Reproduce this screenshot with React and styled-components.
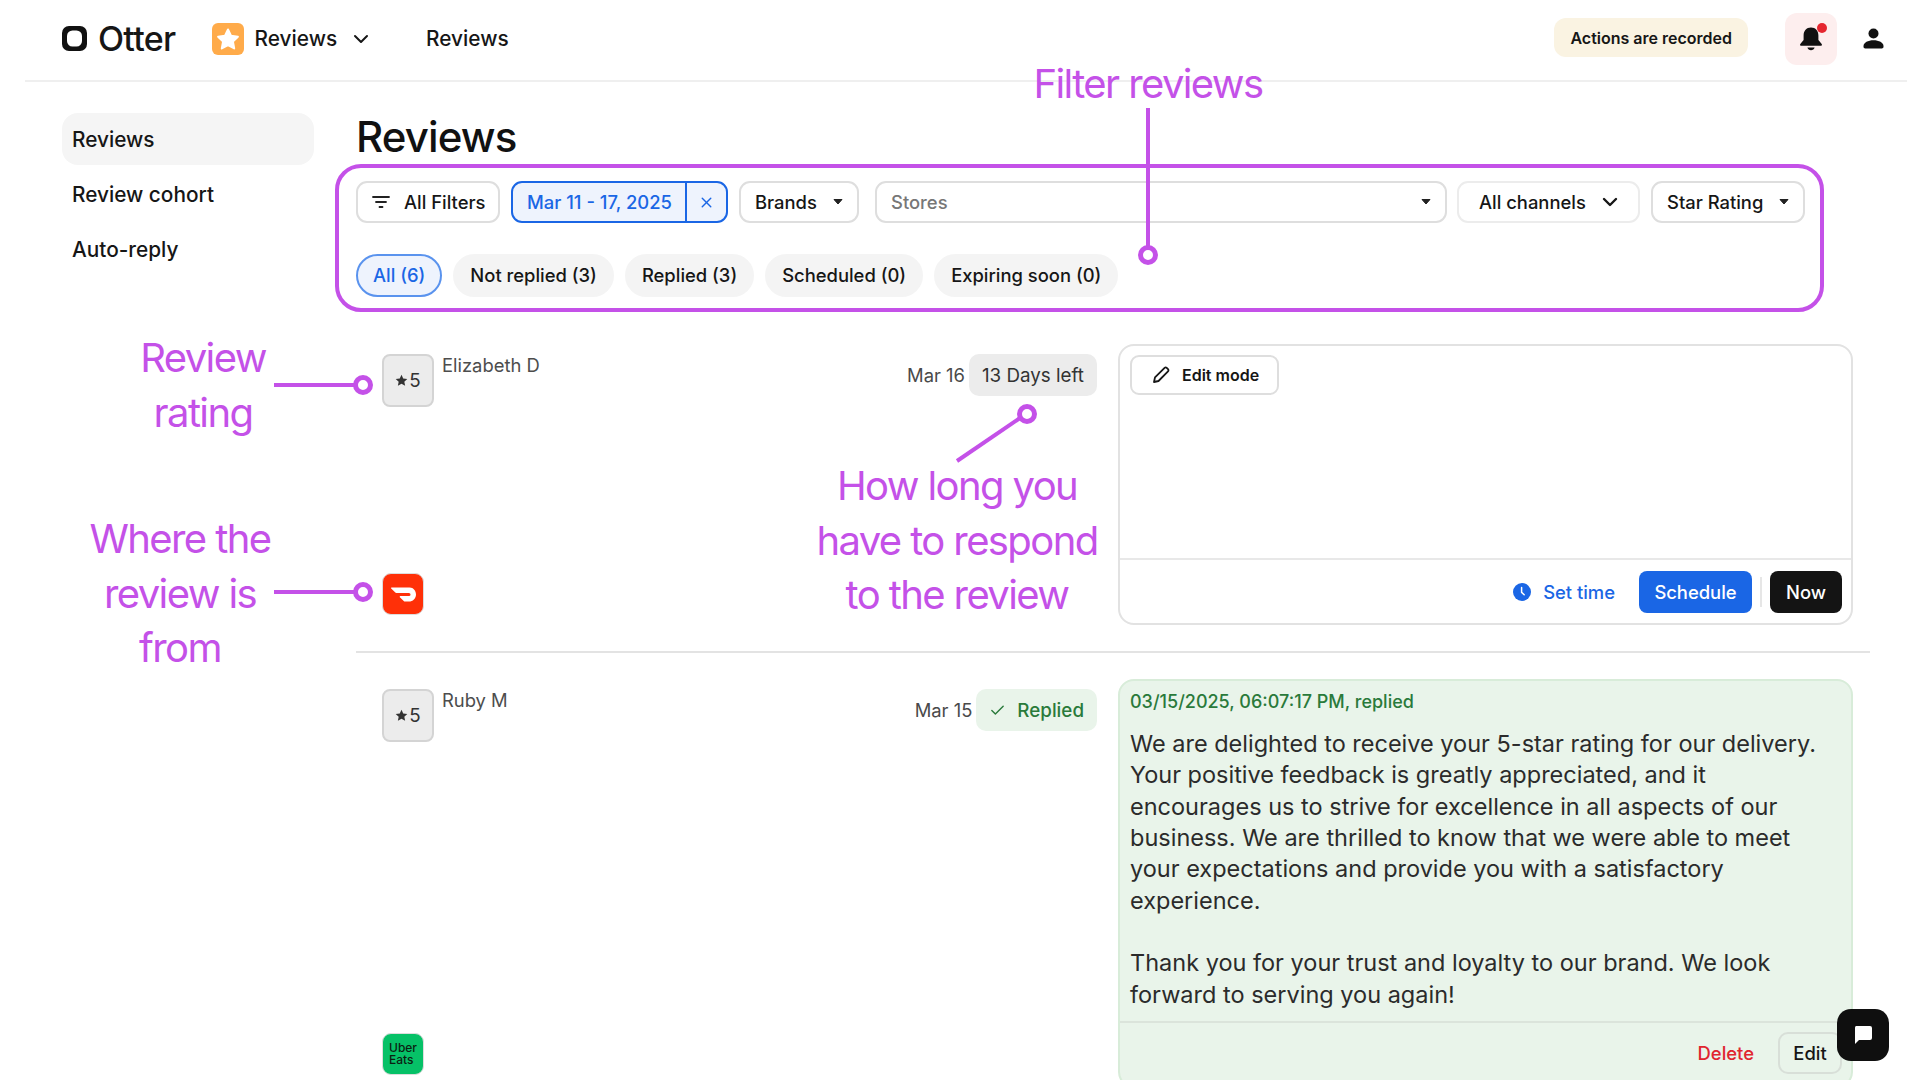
import React from "react";
import styled, { createGlobalStyle } from "styled-components";
import { ChevronDown, Check, X } from "lucide-react";

const purple = "#c451e8";
const blue = "#1a66e5";
const ink = "#161616";

const GlobalStyle = createGlobalStyle`
  * { box-sizing: border-box; }
  html, body { margin: 0; padding: 0; background: #fff; }
  body {
    font-family: Inter, "Liberation Sans", sans-serif;
    color: ${ink};
    overflow: hidden;
  }
`;

const Page = styled.div`
  position: relative;
  width: 1920px;
  height: 1080px;
  overflow: hidden;
`;

/* ---------- top bar ---------- */
const TopBar = styled.header`
  display: flex;
  align-items: center;
  height: 82px;
  margin: 0 13px 0 25px;
  padding: 0 23px 3px 37px;
  border-bottom: 2px solid #efefef;
`;
const LogoText = styled.span`
  margin-left: 11px;
  font-size: 34px;
  font-weight: 500;
  letter-spacing: -0.7px;
`;
const AppSwitch = styled.div`
  display: flex;
  align-items: center;
  margin-left: 36px;
  font-size: 20.8px;
  font-weight: 500;
  gap: 11px;
`;
const SwitchChevron = styled(ChevronDown)`
  margin-left: 1px;
`;
const Crumb = styled.span`
  margin-left: 53px;
  font-size: 20.8px;
  font-weight: 500;
`;
const Recorded = styled.div`
  display: flex;
  align-items: center;
  height: 39px;
  margin: 0 0 2px auto;
  padding: 0 16px;
  border-radius: 12px;
  background: #faf3e2;
  font-size: 16px;
  font-weight: 600;
`;
const BellBox = styled.div`
  position: relative;
  display: flex;
  align-items: center;
  justify-content: center;
  width: 52px;
  height: 52px;
  margin-left: 37px;
  border-radius: 12px;
  background: #fdeeee;
`;
const BellDot = styled.span`
  position: absolute;
  top: 10px;
  right: 10px;
  width: 10px;
  height: 10px;
  border-radius: 50%;
  background: #e5262f;
`;
const UserSlot = styled.div`
  display: flex;
  margin-left: 26px;
`;

/* ---------- body ---------- */
const Body = styled.div`
  display: flex;
  gap: 42px;
  padding: 31px 0 0 62px;
`;
const Sidebar = styled.nav`
  display: flex;
  flex-direction: column;
  gap: 3px;
  width: 252px;
  flex: none;
`;
const NavItem = styled.div`
  display: flex;
  align-items: center;
  height: 52px;
  padding-left: 10px;
  border-radius: 16px;
  font-size: 20.8px;
  font-weight: 500;
  background: ${(p) => (p.$active ? "#f5f5f5" : "transparent")};
`;
const Main = styled.main`
  width: 1514px;
  flex: none;
`;
const Title = styled.h1`
  margin: 0 0 20px;
  font-size: 42px;
  line-height: 48px;
  font-weight: 500;
  letter-spacing: -0.9px;
  color: #111;
`;
const FilterRow = styled.div`
  display: flex;
  gap: 11px;
  width: 1449px;
  height: 42px;
`;
const FilterBtn = styled.div`
  display: flex;
  align-items: center;
  justify-content: space-between;
  height: 42px;
  padding: 0 ${(p) => p.$pad || 14}px;
  flex: ${(p) => (p.$grow ? 1 : "none")};
  width: ${(p) => (p.$w ? `${p.$w}px` : "auto")};
  margin-left: ${(p) => p.$ml || 0}px;
  border: 2px solid ${(p) => p.$line || "#dedede"};
  border-radius: 11px;
  background: #fff;
  font-size: 18.4px;
  font-weight: 500;
  white-space: nowrap;
  color: ${(p) => p.$color || ink};
`;
const FilterLabel = styled.span`
  display: flex;
  align-items: center;
  gap: 14px;
`;
const ChannelChevron = styled(ChevronDown)`
  margin-right: -4px;
`;
const DateChip = styled.div`
  display: flex;
  width: 217px;
  height: 42px;
  border: 2px solid ${blue};
  border-radius: 11px;
  background: #eef3fd;
  color: ${blue};
  font-size: 18.4px;
  font-weight: 500;
`;
const DateLabel = styled.span`
  display: flex;
  align-items: center;
  flex: 1;
  padding-left: 14px;
`;
const DateClear = styled.span`
  display: flex;
  align-items: center;
  justify-content: center;
  width: 41px;
  border-left: 2px solid ${blue};
`;
const PillRow = styled.div`
  display: flex;
  gap: 11px;
  margin: 31px 0 47px;
`;
const Pill = styled.div`
  display: flex;
  align-items: center;
  height: 43px;
  padding: 0 15px 1px;
  border-radius: 22px;
  border: 2px solid ${(p) => (p.$active ? "#5a93ee" : "#f4f4f4")};
  background: ${(p) => (p.$active ? "#eef3fd" : "#f4f4f4")};
  color: ${(p) => (p.$active ? blue : ink)};
  font-size: 18.4px;
  font-weight: 500;
`;

/* ---------- review rows ---------- */
const Row = styled.section`
  display: grid;
  grid-template-columns: 741px 735px;
  column-gap: 21px;
  padding: 0 0 26px 0;
  margin-bottom: 26px;
  border-bottom: ${(p) => (p.$last ? "none" : "2px solid #e3e3e3")};
`;
const Left = styled.div`
  display: flex;
  flex-direction: column;
  justify-content: space-between;
  padding: 10px 0 ${(p) => p.$bottom || 10}px 26px;
`;
const LeftTop = styled.div`
  display: flex;
  align-items: flex-start;
`;
const Rating = styled.div`
  display: flex;
  align-items: center;
  justify-content: center;
  gap: 1px;
  width: 52px;
  height: 53px;
  border: 2px solid #d4d4d4;
  border-radius: 8px;
  background: #ececec;
  font-size: 18.8px;
  color: #333;
`;
const Reviewer = styled.div`
  margin-left: 8px;
  font-size: 18.4px;
  line-height: 23px;
  color: #4d4d4d;
`;
const Dateline = styled.span`
  margin-left: auto;
  margin-right: 4px;
  line-height: 42px;
  font-size: 18.4px;
  color: #4a4a4a;
`;
const Badge = styled.div`
  display: flex;
  align-items: center;
  gap: ${(p) => (p.$green ? 11 : 12)}px;
  height: 42px;
  padding: 0 13px;
  border-radius: 10px;
  background: ${(p) => (p.$green ? "#e9f4ea" : "#ececec")};
  color: ${(p) => (p.$green ? "#2a7a3b" : "#333")};
  font-size: 18.8px;
  font-weight: ${(p) => (p.$green ? 500 : 400)};
`;
const ChannelTile = styled.div`
  display: flex;
  align-items: center;
  justify-content: center;
  width: 42px;
  height: 42px;
  border: 1px solid #ddd;
  border-radius: 9px;
  background: ${(p) => p.$bg};
`;
const UberText = styled.span`
  font-size: 12px;
  line-height: 12px;
  font-weight: 500;
  color: #0b1f12;
`;
const Card = styled.div`
  display: flex;
  flex-direction: column;
  min-height: 281px;
  border: 2px solid ${(p) => (p.$green ? "#d8ecd9" : "#e2e2e2")};
  border-radius: 16px;
  background: ${(p) => (p.$green ? "#e9f4ea" : "#fff")};
`;
const CardBody = styled.div`
  flex: 1;
  padding: 9px 10px;
`;
const EditMode = styled.div`
  display: inline-flex;
  align-items: center;
  gap: 12px;
  height: 40px;
  padding: 0 18px 0 20px;
  border: 2px solid #dedede;
  border-radius: 9px;
  font-size: 16px;
  font-weight: 600;
`;
const CardFooter = styled.div`
  display: flex;
  align-items: center;
  justify-content: flex-end;
  height: 65px;
  padding: ${(p) => (p.$green ? "0 9px 3px 0" : "1px 9px 0 0")};
  border-top: 2px solid ${(p) => (p.$green ? "#dbe4db" : "#e8e8e8")};
`;
const SetTime = styled.span`
  display: flex;
  align-items: center;
  gap: 12px;
  margin-right: 24px;
  color: ${blue};
  font-size: 18.4px;
  font-weight: 500;
`;
const Solid = styled.div`
  display: flex;
  align-items: center;
  justify-content: center;
  height: 42px;
  width: ${(p) => p.$w}px;
  border-radius: 8px;
  background: ${(p) => p.$bg};
  color: #fff;
  font-size: 18.4px;
  font-weight: 500;
`;
const Sep = styled.span`
  width: 2px;
  height: 30px;
  margin: 0 8px;
  background: #e6e6e6;
`;
const RepliedStamp = styled.div`
  padding: 10px 10px 0;
  color: #2a7a3b;
  font-size: 18px;
  line-height: 22px;
  font-weight: 500;
`;
const ReplyText = styled.p`
  margin: 0;
  padding: 15px 10px 11px;
  font-size: 23.5px;
  line-height: 31.35px;
  color: #2b2b2b;
  white-space: pre-line;
`;
const DeleteLink = styled.span`
  margin-right: 24px;
  color: #e0262f;
  font-size: 18.4px;
  font-weight: 500;
`;
const EditBtn = styled.div`
  display: flex;
  align-items: center;
  justify-content: center;
  width: 64px;
  height: 42px;
  border: 2px solid #d8dfd8;
  border-radius: 10px;
  font-size: 18.4px;
  font-weight: 500;
`;
const ChatFab = styled.div`
  position: absolute;
  left: 1837px;
  top: 1009px;
  display: flex;
  align-items: center;
  justify-content: center;
  width: 52px;
  height: 52px;
  border-radius: 14px;
  background: #0f0f0f;
`;

/* ---------- purple annotations laid over the page ---------- */
const Frame = styled.div`
  position: absolute;
  left: 335px;
  top: 164px;
  width: 1489px;
  height: 148px;
  border: 4px solid ${purple};
  border-radius: 26px;
  pointer-events: none;
`;
const Note = styled.div`
  position: absolute;
  left: ${(p) => p.$cx - 200}px;
  top: ${(p) => p.$top}px;
  width: 400px;
  text-align: center;
  font-size: 40px;
  line-height: 54.6px;
  letter-spacing: -1.6px;
  color: ${purple};
`;
const Marks = styled.svg`
  position: absolute;
  left: 0;
  top: 0;
  pointer-events: none;
`;

const Caret = () => (
  <svg width="10" height="6" viewBox="0 0 10 6"><path d="M1 .5h8L5 5z" fill="#222" stroke="#222" strokeLinejoin="round" /></svg>
);

const LogoMark = () => (
  <svg width="25" height="25" viewBox="0 0 25 25">
    <rect x="0" y="0" width="25" height="25" rx="7" fill="#111" />
    <rect x="5" y="4.5" width="15" height="16" rx="5.5" fill="#fff" />
  </svg>
);

const StarTile = () => (
  <svg width="32" height="32" viewBox="0 0 32 32">
    <rect width="32" height="32" rx="6" fill="#ffab4a" />
    <path d="M16 6.5l3 6.3 6.9.9-5 4.8 1.3 6.9-6.2-3.4-6.2 3.4 1.3-6.9-5-4.8 6.9-.9z" fill="#fff" stroke="#fff" strokeWidth="2" strokeLinejoin="round" />
  </svg>
);

const Bell = () => (
  <svg width="24" height="26" viewBox="0 0 24 26">
    <path d="M12 1.5c-4.6 0-7.4 3.4-7.4 8v4.6L1.3 18c-.6.8 0 1.8 1 1.8h19.4c1 0 1.6-1 1-1.8l-3.3-3.9V9.5c0-4.6-2.8-8-7.4-8z" fill="#111" />
    <path d="M8.4 21.6h7.2c-.5 1.7-1.9 2.7-3.6 2.7s-3.1-1-3.6-2.7z" fill="#111" />
  </svg>
);

const UserIcon = () => (
  <svg width="21" height="21" viewBox="0 0 21 21">
    <circle cx="10.5" cy="5.5" r="5" fill="#111" />
    <path d="M0.5 18c0-3.6 4.6-5.8 10-5.8s10 2.2 10 5.8v.8c0 1-.8 1.7-1.7 1.7H2.2c-.9 0-1.7-.7-1.7-1.7z" fill="#111" />
  </svg>
);

const FilterIcon = () => (
  <svg width="18" height="14" viewBox="0 0 18 14">
    <path d="M1 2h16M4 7h10M7.5 12h3" stroke="#222" strokeWidth="1.8" strokeLinecap="round" fill="none" />
  </svg>
);

const Pencil = () => (
  <svg width="18" height="18" viewBox="0 0 18 18" fill="none" stroke="#161616" strokeWidth="1.8" strokeLinejoin="round">
    <path d="M2 16l1-4.6L12.6 1.9c.6-.6 1.5-.6 2.1 0l1.3 1.3c.6.6.6 1.5 0 2.1L6.5 15z" />
  </svg>
);

const Clock = () => (
  <svg width="18" height="18" viewBox="0 0 18 18">
    <circle cx="9" cy="9" r="9" fill={blue} />
    <path d="M8.6 4.5v4.8l2.6 2.4" fill="none" stroke="#fff" strokeWidth="1.5" strokeLinecap="round" />
  </svg>
);

const Star = () => (
  <svg width="13" height="13" viewBox="0 0 24 24"><path d="M12 1.5l3.2 6.9 7.5.9-5.5 5.1 1.5 7.4-6.7-3.7-6.7 3.7 1.5-7.4L1.3 9.3l7.5-.9z" fill="#333" /></svg>
);

const DoorDash = () => (
  <svg width="25" height="25" viewBox="0 0 24 24">
    <path d="M23.071 8.409a6.09 6.09 0 00-5.396-3.228H.584A.589.589 0 00.17 6.184L3.894 9.93a1.752 1.752 0 001.242.516h12.049a1.554 1.554 0 11.031 3.108H8.91a.589.589 0 00-.415 1.003l3.725 3.747a1.75 1.75 0 001.242.516h3.757c4.887 0 8.584-5.225 5.852-10.413" fill="#fff" />
  </svg>
);

const ChatIcon = () => (
  <svg width="20" height="20" viewBox="0 0 20 20">
    <path d="M3 1h14a2 2 0 012 2v10a2 2 0 01-2 2H6l-4 4V3a2 2 0 011-2z" fill="#fff" />
  </svg>
);

const pills = ["Not replied (3)", "Replied (3)", "Scheduled (0)", "Expiring soon (0)"];

const reply = `We are delighted to receive your 5-star rating for our delivery.
Your positive feedback is greatly appreciated, and it
encourages us to strive for excellence in all aspects of our
business. We are thrilled to know that we were able to meet
your expectations and provide you with a satisfactory
experience.

Thank you for your trust and loyalty to our brand. We look
forward to serving you again!`;

const Annotations = () => (
  <>
    <Frame />
    <Marks width="1920" height="1080" viewBox="0 0 1920 1080" fill="none" stroke={purple} strokeWidth="4">
      <path d="M1148 108V246" />
      <circle cx="1148" cy="255" r="7.5" fill="#fff" strokeWidth="5" />
      <path d="M274 385H356" />
      <circle cx="363" cy="385" r="7.5" fill="#fff" strokeWidth="5" />
      <path d="M274 592H356" />
      <circle cx="363" cy="592" r="7.5" fill="#fff" strokeWidth="5" />
      <path d="M957 461L1020 418" />
      <circle cx="1027" cy="414" r="7.5" fill="#fff" strokeWidth="5" />
    </Marks>
    <Note $cx={1148} $top={57}>Filter reviews</Note>
    <Note $cx={203} $top={331}>Review<br />rating</Note>
    <Note $cx={180} $top={512}>Where the<br />review is<br />from</Note>
    <Note $cx={957} $top={459}>How long you<br />have to respond<br />to the review</Note>
  </>
);

export default function App() {
  return (
    <Page>
      <GlobalStyle />
      <TopBar>
        <LogoMark />
        <LogoText>Otter</LogoText>
        <AppSwitch>
          <StarTile />
          Reviews
          <SwitchChevron size={24} strokeWidth={2} />
        </AppSwitch>
        <Crumb>Reviews</Crumb>
        <Recorded>Actions are recorded</Recorded>
        <BellBox>
          <Bell />
          <BellDot />
        </BellBox>
        <UserSlot>
          <UserIcon />
        </UserSlot>
      </TopBar>

      <Body>
        <Sidebar>
          <NavItem $active>Reviews</NavItem>
          <NavItem>Review cohort</NavItem>
          <NavItem>Auto-reply</NavItem>
        </Sidebar>

        <Main>
          <Title>Reviews</Title>
          <FilterRow>
            <FilterBtn $w={144}>
              <FilterLabel>
                <FilterIcon />
                All Filters
              </FilterLabel>
            </FilterBtn>
            <DateChip>
              <DateLabel>Mar 11 - 17, 2025</DateLabel>
              <DateClear>
                <X size={17} strokeWidth={2} />
              </DateClear>
            </DateChip>
            <FilterBtn $w={120}>
              Brands
              <Caret />
            </FilterBtn>
            <FilterBtn $grow $ml={5} $color="#777">
              Stores
              <Caret />
            </FilterBtn>
            <FilterBtn $w={183} $ml={-1} $line="#ececec" $pad={20}>
              All channels
              <ChannelChevron size={24} strokeWidth={2.4} />
            </FilterBtn>
            <FilterBtn $w={154}>
              Star Rating
              <Caret />
            </FilterBtn>
          </FilterRow>
          <PillRow>
            <Pill $active>All (6)</Pill>
            {pills.map((p) => (
              <Pill key={p}>{p}</Pill>
            ))}
          </PillRow>

          <Row>
            <Left>
              <LeftTop>
                <Rating>
                  <Star />5
                </Rating>
                <Reviewer>Elizabeth D</Reviewer>
                <Dateline>Mar 16</Dateline>
                <Badge>13 Days left</Badge>
              </LeftTop>
              <ChannelTile $bg="#ff3008">
                <DoorDash />
              </ChannelTile>
            </Left>
            <Card>
              <CardBody>
                <EditMode>
                  <Pencil />
                  Edit mode
                </EditMode>
              </CardBody>
              <CardFooter>
                <SetTime>
                  <Clock />
                  Set time
                </SetTime>
                <Solid $w={113} $bg={blue}>Schedule</Solid>
                <Sep />
                <Solid $w={72} $bg="#141414">Now</Solid>
              </CardFooter>
            </Card>
          </Row>

          <Row $last>
            <Left $bottom={13}>
              <LeftTop>
                <Rating>
                  <Star />5
                </Rating>
                <Reviewer>Ruby M</Reviewer>
                <Dateline>Mar 15</Dateline>
                <Badge $green>
                  <Check size={17} strokeWidth={2} />
                  Replied
                </Badge>
              </LeftTop>
              <ChannelTile $bg="#06c167">
                <UberText>Uber<br />Eats</UberText>
              </ChannelTile>
            </Left>
            <Card $green>
              <RepliedStamp>03/15/2025, 06:07:17 PM, replied</RepliedStamp>
              <ReplyText>{reply}</ReplyText>
              <CardFooter $green>
                <DeleteLink>Delete</DeleteLink>
                <EditBtn>Edit</EditBtn>
              </CardFooter>
            </Card>
          </Row>
        </Main>
      </Body>

      <Annotations />
      <ChatFab>
        <ChatIcon />
      </ChatFab>
    </Page>
  );
}
